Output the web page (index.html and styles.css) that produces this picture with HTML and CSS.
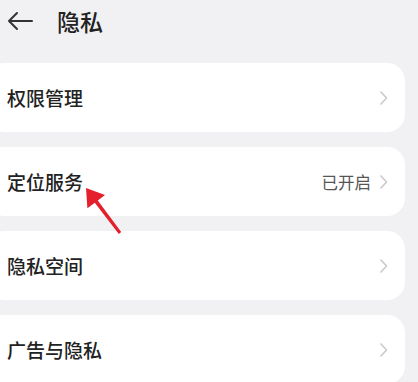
FILE: index.html
```html
<!DOCTYPE html>
<html lang="zh-CN">
<head>
    <meta charset="UTF-8">
    <title>隐私</title>
    <link rel="stylesheet" href="styles.css">
</head>
<body>
<div class="header">
    <svg class="back" width="28" height="20" viewBox="0 0 28 20">
        <path d="M26 10 H3 M11 2 L3 10 L11 18" fill="none" stroke="#333" stroke-width="2" stroke-linecap="round" stroke-linejoin="round"/>
    </svg>
    <span class="title">隐私</span>
</div>
<div class="list">
    <div class="card">
        <span class="label">权限管理</span>
        <span class="right"><svg class="chev" width="9" height="16" viewBox="0 0 9 16"><polyline points="1.5,1.5 7.5,8 1.5,14.5" fill="none" stroke="#c6c6c6" stroke-width="1.4"/></svg></span>
    </div>
    <div class="card">
        <span class="label">定位服务</span>
        <span class="right"><span class="status">已开启</span><svg class="chev" width="9" height="16" viewBox="0 0 9 16"><polyline points="1.5,1.5 7.5,8 1.5,14.5" fill="none" stroke="#c6c6c6" stroke-width="1.4"/></svg></span>
    </div>
    <div class="card">
        <span class="label">隐私空间</span>
        <span class="right"><svg class="chev" width="9" height="16" viewBox="0 0 9 16"><polyline points="1.5,1.5 7.5,8 1.5,14.5" fill="none" stroke="#c6c6c6" stroke-width="1.4"/></svg></span>
    </div>
    <div class="card">
        <span class="label">广告与隐私</span>
        <span class="right"><svg class="chev" width="9" height="16" viewBox="0 0 9 16"><polyline points="1.5,1.5 7.5,8 1.5,14.5" fill="none" stroke="#c6c6c6" stroke-width="1.4"/></svg></span>
    </div>
</div>
<svg class="pointer" width="418" height="382" viewBox="0 0 418 382">
    <polygon points="86,188 105,195 97.8,200.6 121.2,232 118.8,234 94.8,202.8 87.4,208.2" fill="#e3202b"/>
</svg>
</body>
</html>
```
FILE: styles.css
```css
body {
    margin: 0;
    background-color: #f1f1f3;
    font-family: "Noto Sans CJK SC", "Noto Sans", sans-serif;
    color: #222;
    width: 418px;
    height: 382px;
    overflow: hidden;
    position: relative;
}
.header {
    display: flex;
    align-items: center;
    height: 42px;
    padding: 0 0 0 6px;
}
.title {
    font-size: 23px;
    font-weight: 500;
    margin-left: 23px;
    line-height: 1;
}
.list {
    display: flex;
    flex-direction: column;
    gap: 15px;
    margin: 21px 0 0 -14px;
    width: 419px;
}
.card {
    background-color: #fff;
    border-radius: 18px;
    height: 69px;
    display: flex;
    align-items: center;
    justify-content: space-between;
    padding: 0 17px 0 21px;
}
.label {
    font-size: 19px;
    font-weight: 500;
}
.right {
    display: flex;
    align-items: center;
    gap: 8px;
}
.status {
    font-size: 16.5px;
    color: #555;
}
.pointer {
    position: absolute;
    left: 0;
    top: 0;
}
```
